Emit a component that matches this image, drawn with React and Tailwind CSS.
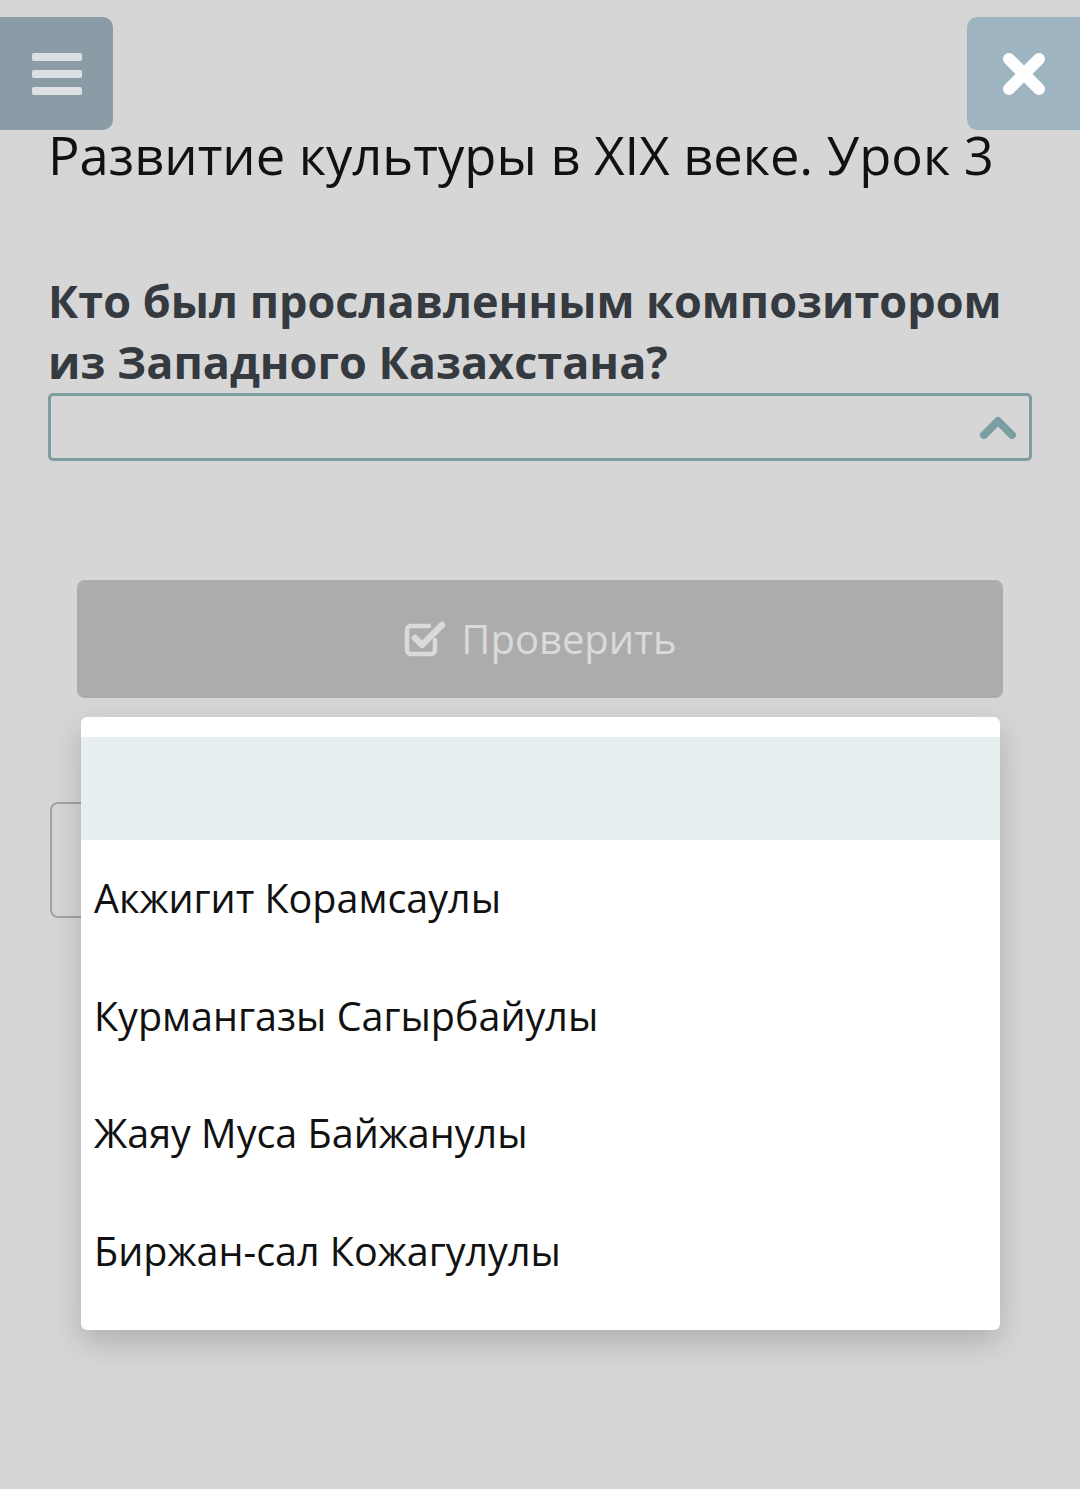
import React from "react";

const options = [
  "Акжигит Корамсаулы",
  "Курмангазы Сагырбайулы",
  "Жаяу Муса Байжанулы",
  "Биржан-сал Кожагулулы",
];

function CheckSquareIcon() {
  return (
    <svg width="44" height="42" viewBox="0 0 44 42" fill="none">
      <path
        d="M32 22v10a4 4 0 0 1-4 4H8a4 4 0 0 1-4-4V12a4 4 0 0 1 4-4h18"
        stroke="#dadada"
        strokeWidth="4.5"
        strokeLinecap="round"
      />
      <path
        d="M12 20l7 7L39 7"
        stroke="#dadada"
        strokeWidth="6.5"
        strokeLinecap="round"
        strokeLinejoin="round"
      />
    </svg>
  );
}

export default function App() {
  return (
    <div
      className="relative min-h-[1489px] bg-[#d6d6d6] overflow-hidden"
      style={{ fontFamily: '"Open Sans", "Noto Sans", sans-serif' }}
    >
      {/* top overlay buttons */}
      <button className="absolute left-0 top-[17px] w-[113px] h-[113px] rounded-r-[10px] bg-[#8b9ca7] flex flex-col items-center justify-center gap-[9px]">
        <span className="block w-[50px] h-[8px] rounded-[2px] bg-[#dde0e2]" />
        <span className="block w-[50px] h-[8px] rounded-[2px] bg-[#dde0e2]" />
        <span className="block w-[50px] h-[8px] rounded-[2px] bg-[#dde0e2]" />
      </button>
      <button className="absolute right-0 top-[17px] w-[113px] h-[113px] rounded-l-[10px] bg-[#9fb4c1] flex items-center justify-center">
        <svg width="46" height="46" viewBox="0 0 46 46">
          <path
            d="M8 8L38 38M38 8L8 38"
            stroke="#ffffff"
            strokeWidth="12"
            strokeLinecap="round"
          />
        </svg>
      </button>

      <div className="px-[48px] pt-[120px]">
        <h1 className="text-[52.5px] leading-[70px] text-[#111] font-normal">
          Развитие культуры в XIX веке. Урок 3
        </h1>

        <p className="mt-[80px] text-[45px] leading-[61px] font-bold text-[#343a40]">
          Кто был прославленным композитором из Западного Казахстана?
        </p>

        <div className="mt-[1px] h-[68px] border-[3px] border-[#7f9d9f] rounded-[5px] flex items-center justify-end pr-[12px]">
          <svg width="38" height="26" viewBox="0 0 38 26">
            <path
              d="M5 21L19 7L33 21"
              stroke="#7b9ea3"
              strokeWidth="8"
              fill="none"
              strokeLinecap="round"
              strokeLinejoin="round"
            />
          </svg>
        </div>

        <button className="mt-[119px] ml-[29px] w-[926px] h-[118px] rounded-[8px] bg-[#acacac] flex items-center justify-center gap-[14px] text-[40px] text-[#dadada]">
          <CheckSquareIcon />
          <span>Проверить</span>
        </button>

        <div className="mt-[104px] ml-[2px] w-[440px] h-[116px] rounded-[8px] border-2 border-[#a3a3a3]" />
      </div>

      {/* open dropdown list */}
      <div className="absolute left-[81px] top-[717px] w-[919px] py-[20px] bg-white rounded-[6px] shadow-[0_12px_30px_rgba(0,0,0,0.18)]">
        <div className="h-[103px] bg-[#e8eff1]" />
        {options.map((o) => (
          <div
            key={o}
            className="h-[117.5px] flex items-center pl-[13px] text-[39.5px] text-[#111]"
          >
            {o}
          </div>
        ))}
      </div>
    </div>
  );
}
